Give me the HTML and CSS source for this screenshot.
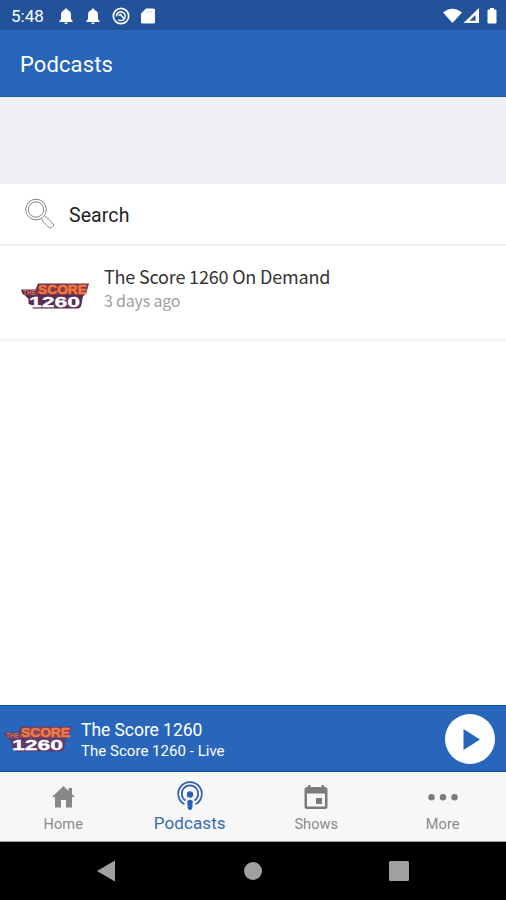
FILE: index.html
```html
<!DOCTYPE html>
<html lang="en">
<head>
<meta charset="utf-8">
<title>Podcasts</title>
<link rel="stylesheet" href="styles.css">
</head>
<body>
<header>
  <div class="status">
    <span class="clock">5:48</span>
    <svg class="bell" width="14" height="16" viewBox="0 0 14 16"><path d="M7 .5c1 0 1.500.7 1.500 1.600C10.900 2.700 12 4.500 12 6.700V11l1.500 2v1H.5v-1L2 11V6.700C2 4.500 3.100 2.700 5.500 2.100 5.500 1.200 6 .5 7 .5zM5.500 14.500h3c0 1-.6 1.500-1.500 1.500s-1.500-.5-1.500-1.500z"/></svg>
    <svg class="bell second" width="14" height="16" viewBox="0 0 14 16"><path d="M7 .5c1 0 1.500.7 1.500 1.600C10.900 2.700 12 4.500 12 6.700V11l1.500 2v1H.5v-1L2 11V6.700C2 4.500 3.100 2.700 5.500 2.100 5.500 1.200 6 .5 7 .5zM5.500 14.500h3c0 1-.6 1.500-1.500 1.500s-1.500-.5-1.500-1.500z"/></svg>
    <svg class="sync" width="18" height="18" viewBox="0 0 18 18"><g fill="none" stroke="#fff"><circle cx="9" cy="9" r="7.700" stroke-width="1.700"/><path d="M4.600 9.500C4 6 8 3.600 11 5.300s3 6 .3 7.500-5 .2-5-.3" stroke-width="1.400"/><path d="M6.500 8.300l2-.8 4 4.500" stroke-width="1.700"/></g></svg>
    <svg class="card" width="14" height="16" viewBox="0 0 14 16"><path d="M5 .5h7.500Q14 .5 14 2v12q0 1.500-1.500 1.500h-11Q0 15.500 0 14V5.500z" fill="#fff"/><path d="M5 3v2M7.700 3v2M10.400 3v2" stroke="#c3d1e6" stroke-width="1"/></svg>
    <svg class="signals" width="56" height="18" viewBox="0 0 56 18"><path d="M0 5.500Q9.500-2.200 19 5.500L9.500 16z" fill="#fff"/><path d="M36 1v15H20.500z" fill="#fff"/><path d="M32.500 8V13.700H26.500z" fill="#22529a"/><path d="M47 1h4v1.500h1.500q1 0 1 1v12q0 1-1 1h-7q-1 0-1-1v-12q0-1 1-1h1.500z" fill="#fff"/></svg>
  </div>
  <h1>Podcasts</h1>
</header>
<main>
  <div class="banner"></div>
  <div class="search">
    <svg width="32" height="32" viewBox="0 0 32 32"><g fill="#fff" stroke="#858585" stroke-width="1"><circle cx="12" cy="11.500" r="10.300"/><circle cx="12" cy="11.500" r="7.700"/><path d="M17.500 20.500L19 23.500l6.500 6.500q2 1 4.500-3L23.500 20 20.500 18"/></g></svg>
    <span>Search</span>
  </div>
  <article>
    <svg class="logo" width="68" height="26" viewBox="0 0 68 26">
      <path d="M17 .5H68L65.500 9 62 13.500 60 23.500 57.500 25.500H12L10.500 22 7.500 21V16L4 12.500 1.500 11 0 6.500H14.500z" fill="#5b2d55"/>
      <path d="M18 1.500H67L64 11.500H14.500z" fill="#8a3c42"/>
      <text class="logo-word" x="17" y="11.300" textLength="49" lengthAdjust="spacingAndGlyphs">SCORE</text>
      <text class="logo-the" x="2" y="12" textLength="13" lengthAdjust="spacingAndGlyphs">THE</text>
      <text class="logo-number" x="8" y="24" textLength="51" lengthAdjust="spacingAndGlyphs">1260</text>
    </svg>
    <div><h2>The Score 1260 On Demand</h2><p>3 days ago</p></div>
  </article>
</main>
<section class="player">
  <svg class="logo" width="68" height="26" viewBox="0 0 68 26">
    <path d="M17 .5H68L65.500 9 62 13.500 60 23.500 57.500 25.500H12L10.500 22 7.500 21V16L4 12.500 1.500 11 0 6.500H14.500z" fill="#5b3c6b"/>
    <path d="M18 1.500H67L64 11.500H14.500z" fill="#87485b"/>
    <text class="logo-word" x="17" y="11.300" textLength="49" lengthAdjust="spacingAndGlyphs">SCORE</text>
    <text class="logo-the" x="2" y="12" textLength="13" lengthAdjust="spacingAndGlyphs">THE</text>
    <text class="logo-number" x="8" y="24" textLength="51" lengthAdjust="spacingAndGlyphs">1260</text>
  </svg>
  <div class="track"><b>The Score 1260</b><span>The Score 1260 - Live</span></div>
  <svg class="play" width="50" height="50" viewBox="0 0 50 50"><circle cx="25" cy="25" r="25" fill="#fff"/><path d="M18.500 15v21L35 25.500z" fill="#2866bb"/></svg>
</section>
<nav class="tabs">
  <div><svg width="30" height="30" viewBox="0 0 30 30"><path fill="#878787" d="M15.500 4L4 15h3v10.500h6V18h5v7.500h6V15h3l-3-3V6h-3.500v3z"/></svg><span>Home</span></div>
  <div class="active"><svg width="30" height="30" viewBox="0 0 30 30"><g fill="none" stroke="#2b60b4" stroke-width="1.700"><path d="M9.500 23.300A11.800 11.800 0 1 1 20.500 23.300"/><path d="M10.500 19.500A8.200 8.200 0 1 1 19.500 19.500"/></g><circle cx="15" cy="13.500" r="3.200" fill="#2b60b4"/><path d="M12.200 20q2.800-2.500 5.600 0l-.5 7q-.3 2-2.300 2t-2.300-2z" fill="#2b60b4"/></svg><span>Podcasts</span></div>
  <div><svg width="30" height="30" viewBox="0 0 30 30"><path fill="#7b7b7b" fill-rule="evenodd" d="M7 3h2.500v2h11V3H23v2h1q2.500 0 2.500 2.500v17q0 2.500-2.500 2.500H6q-2.500 0-2.500-2.500v-17Q3.500 5 6 5h1zM6 11.500V24.500h18v-13z"/><path d="M15 16h6v6h-6z" fill="#7b7b7b"/></svg><span>Shows</span></div>
  <div><svg width="30" height="30" viewBox="0 0 30 30"><g fill="#7b7b7b"><circle cx="3.500" cy="15.300" r="3.200"/><circle cx="15" cy="15.300" r="3.200"/><circle cx="26.500" cy="15.300" r="3.200"/></g></svg><span>More</span></div>
</nav>
<footer>
  <svg width="18" height="22" viewBox="0 0 18 22"><path d="M18 .5v21L0 11z"/></svg>
  <svg class="home-key" width="18" height="18" viewBox="0 0 18 18"><circle cx="9" cy="9" r="9"/></svg>
  <svg width="20" height="20" viewBox="0 0 20 20"><rect width="20" height="20" rx="1.500"/></svg>
</footer>
</body>
</html>
```
FILE: styles.css
```css
* { box-sizing: border-box; }
body { margin: 0; width: 506px; height: 900px; display: flex; flex-direction: column; background: #fff; font-family: Roboto, sans-serif; overflow: hidden; }
h1, h2, p { margin: 0; font-weight: 400; }
header { height: 97px; background: #2866bb; color: #fff; border-bottom: 1px solid #1757ad; }
.status { height: 30px; display: flex; align-items: center; padding: 1px 7px 0 11px; background: #22529a; }
.clock { width: 48px; font-size: 17px; line-height: 28px; padding-top: 1px; white-space: nowrap; }
.bell { fill: #fff; }
.second { margin-left: 13px; }
.sync { margin-left: 12px; }
.card { margin-left: 11px; }
.signals { margin-left: auto; }
h1 { padding-left: 20px; font-size: 22px; line-height: 70px; letter-spacing: .1px; }
main { flex: 1; }
.banner { height: 87px; background: #efeff4; }
.search { height: 62px; display: flex; align-items: center; padding-left: 24px; border-bottom: 2px solid #ececee; font-size: 19.5px; color: #222; }
.search span { margin-left: 13px; padding-top: 2px; letter-spacing: .1px; }
article { height: 96px; display: flex; border-bottom: 4px solid #f7f7f7; padding-left: 21px; }
article .logo { margin-top: 37px; }
article div { margin: 18px 0 0 15px; font-family: "Noto Sans CJK SC", sans-serif; }
h2 { font-size: 18px; line-height: 25px; color: #333; letter-spacing: -.18px; }
article p { font-size: 16px; line-height: 23px; color: #a0a0a0; letter-spacing: -.2px; }
.logo text { font-family: "Liberation Sans", sans-serif; font-weight: bold; }
.logo-word { fill: #f47b42; font-size: 13px; stroke: #f47b42; stroke-width: .4px; }
.logo-the { fill: #e0714f; font-size: 6.5px; }
.logo-number { fill: #fff; font-size: 15px; stroke: #fff; stroke-width: .3px; }
.player { height: 67px; display: flex; align-items: center; padding: 1px 11px 0 4px; background: #2866bb; border: solid #0e4eaa; border-width: 1px 0; color: #fff; }
.track { margin-left: 9px; padding-top: 3px; display: flex; flex-direction: column; }
.track b { font-size: 17.5px; font-weight: 400; line-height: 22px; letter-spacing: -.05px; }
.track span { font-size: 15px; line-height: 21px; letter-spacing: .03px; }
.play { margin-left: auto; }
.tabs { height: 70px; display: flex; background: #f7f7f7; border-bottom: 1px solid #999; }
.tabs div { flex: 1; display: flex; flex-direction: column; align-items: center; padding-top: 10px; color: #8a8a8a; font-size: 14.5px; }
.tabs span { line-height: 18px; margin-top: 4px; letter-spacing: .1px; }
.tabs .active { color: #3868b4; font-size: 17px; padding-top: 9px; }
.tabs .active span { margin-top: 3px; }
footer { height: 58px; background: #000; display: flex; align-items: center; padding: 0 97px; justify-content: space-between; fill: #a0a0a0; }
.home-key { margin-left: 2px; }
```
